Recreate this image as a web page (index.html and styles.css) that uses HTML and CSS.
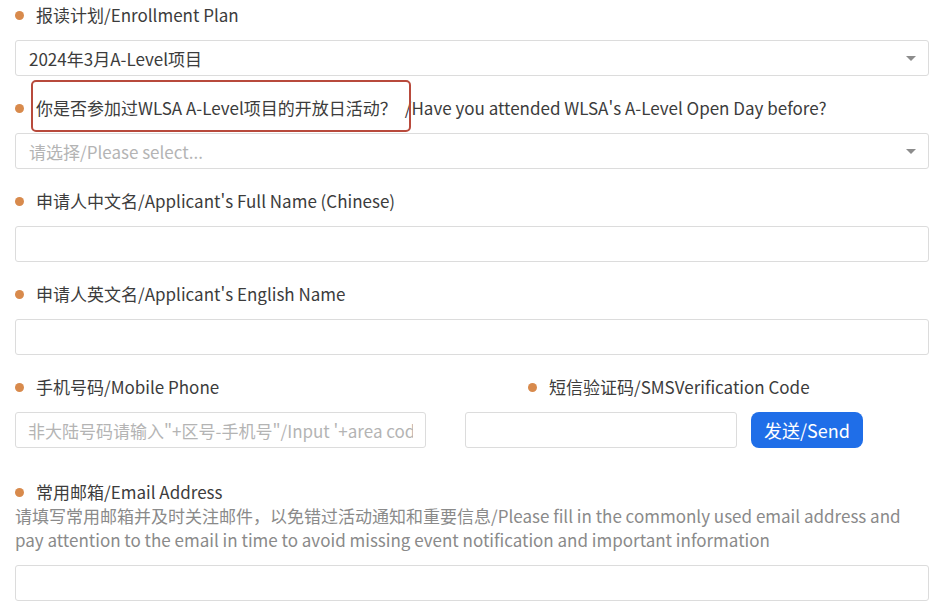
FILE: index.html
```html
<!DOCTYPE html>
<html lang="zh-CN">
<head>
    <meta charset="UTF-8">
    <meta name="viewport" content="width=device-width, initial-scale=1.0">
    <title>报名表</title>
    <link rel="stylesheet" href="styles.css">
</head>
<body>
    <form class="form">
        <div class="field">
            <label class="label"><span class="dot"></span>报读计划/Enrollment Plan</label>
            <div class="select">
                <span>2024年3月A-Level项目</span>
                <span class="caret"></span>
            </div>
        </div>

        <div class="field">
            <label class="label"><span class="dot"></span><span class="marked">你是否参加过WLSA A-Level项目的开放日活动？<span class="mark-box"></span></span>/Have you attended WLSA's A-Level Open Day before?</label>
            <div class="select">
                <span class="placeholder">请选择/Please select...</span>
                <span class="caret"></span>
            </div>
        </div>

        <div class="field">
            <label class="label"><span class="dot"></span>申请人中文名/Applicant's Full Name (Chinese)</label>
            <input class="input" type="text">
        </div>

        <div class="field">
            <label class="label"><span class="dot"></span>申请人英文名/Applicant's English Name</label>
            <input class="input" type="text">
        </div>

        <div class="field-row">
            <div class="field phone">
                <label class="label"><span class="dot"></span>手机号码/Mobile Phone</label>
                <input class="input" type="text" placeholder="非大陆号码请输入&quot;+区号-手机号&quot;/Input '+area code-phone number'">
            </div>
            <div class="field sms">
                <label class="label sms-label"><span class="dot"></span>短信验证码/SMSVerification Code</label>
                <div class="sms-line">
                    <input class="input sms-input" type="text">
                    <button type="button" class="send">发送/Send</button>
                </div>
            </div>
        </div>

        <div class="field email">
            <label class="label"><span class="dot"></span>常用邮箱/Email Address</label>
            <p class="hint">请填写常用邮箱并及时关注邮件，以免错过活动通知和重要信息/Please fill in the commonly used email address and pay attention to the email in time to avoid missing event notification and important information</p>
            <input class="input" type="text">
        </div>
    </form>
</body>
</html>
```

FILE: styles.css
```css
body {
    margin: 0;
    background: #fff;
    font-family: "Noto Sans CJK SC", "Noto Sans", sans-serif;
    font-size: 17px;
    color: #3c3c3c;
}
.form {
    width: 914px;
    padding: 3px 0 0 15px;
    display: flex;
    flex-direction: column;
    gap: 20px;
}
.field {
    display: flex;
    flex-direction: column;
    gap: 13px;
}
.label {
    display: flex;
    align-items: center;
    height: 24px;
    line-height: 24px;
    white-space: nowrap;
}
.dot {
    width: 9px;
    height: 9px;
    border-radius: 50%;
    background: #d88a4c;
    margin: 0 12px 0 0;
    flex: none;
}
.marked {
    position: relative;
    padding-right: 8px;
}
.mark-box {
    position: absolute;
    left: -5px;
    right: -6px;
    top: -16px;
    bottom: -12px;
    border: 2px solid #b84a3c;
    border-radius: 5px;
}
.select, .input {
    box-sizing: border-box;
    height: 36px;
    border: 1px solid #dcdcdc;
    border-radius: 3px;
    background: #fff;
    font: inherit;
}
.select {
    display: flex;
    align-items: center;
    justify-content: space-between;
    padding: 0 12px 0 13px;
}
.placeholder, .input::placeholder {
    color: #b4b4b4;
}
.caret {
    width: 0;
    height: 0;
    border-left: 5px solid transparent;
    border-right: 5px solid transparent;
    border-top: 5px solid #8c8c8c;
}
.input {
    width: 100%;
    padding: 0 12px;
    outline: none;
}
.field-row {
    display: flex;
    gap: 39px;
}
.phone {
    width: 411px;
}
.sms {
    flex: 1;
}
.sms-label {
    padding-left: 63px;
}
.sms-line {
    display: flex;
    align-items: center;
    gap: 14px;
}
.sms-input {
    width: 272px;
}
.send {
    height: 36px;
    width: 112px;
    border: none;
    border-radius: 8px;
    background: #1f6ee8;
    color: #fff;
    font: inherit;
    font-size: 18px;
}
.email {
    margin-top: 12px;
    gap: 0;
}
.hint {
    margin: 0 0 13px;
    line-height: 24px;
    color: #8a8a8a;
}
```
